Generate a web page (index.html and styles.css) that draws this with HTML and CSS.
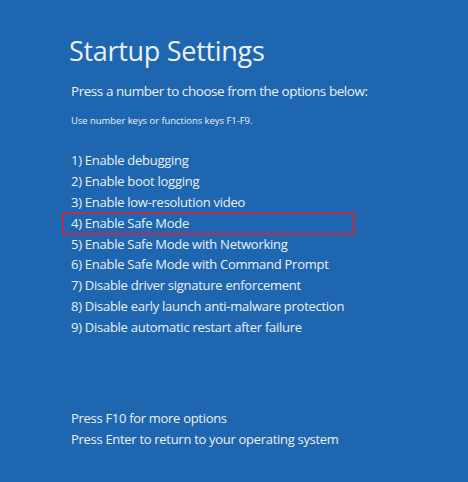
FILE: index.html
```html
<!DOCTYPE html>
<html>
<head><meta charset="utf-8"><link rel="stylesheet" href="styles.css"></head>
<body>
<div class="screen">
  <h1 class="title">Startup Settings</h1>
  <p class="lead">Press a number to choose from the options below:</p>
  <p class="hint">Use number keys or functions keys F1-F9.</p>
  <ul class="options">
    <li>1) Enable debugging</li>
    <li>2) Enable boot logging</li>
    <li>3) Enable low-resolution video</li>
    <li class="selected">4) Enable Safe Mode</li>
    <li>5) Enable Safe Mode with Networking</li>
    <li>6) Enable Safe Mode with Command Prompt</li>
    <li>7) Disable driver signature enforcement</li>
    <li>8) Disable early launch anti-malware protection</li>
    <li>9) Disable automatic restart after failure</li>
  </ul>
  <div class="footer">
    <p>Press F10 for more options</p>
    <p>Press Enter to return to your operating system</p>
  </div>
</div>
</body>
</html>
```
FILE: styles.css
```css
html, body { margin: 0; padding: 0; }
body { background: #1f66b1; width: 468px; height: 482px; overflow: hidden; }
.screen {
  font-family: "Open Sans", "Noto Sans", sans-serif;
  color: #eaf0f8;
  padding: 34px 0 0 71px;
}
.title {
  margin: 0 0 0 -2px;
  font-size: 27px;
  font-weight: 400;
  line-height: 34px;
  letter-spacing: -0.3px;
}
.lead { margin: 13px 0 0; font-size: 13.5px; line-height: 20px; letter-spacing: -0.45px; }
.hint { margin: 13px 0 0; font-size: 9.5px; line-height: 14px; letter-spacing: -0.05px; }
.options { list-style: none; margin: 22px 0 0; padding: 0; font-size: 13px; letter-spacing: -0.27px; }
.options li { height: 20.9px; line-height: 20.9px; position: relative; }
.options li.selected::before {
  content: "";
  position: absolute;
  left: -9px; top: -1px; width: 293px; height: 23px;
  border: 2px solid #b2304c;
  box-sizing: border-box;
}
.footer { margin-top: 70px; font-size: 13px; letter-spacing: -0.3px; }
.footer p { margin: 0; line-height: 21px; }
```
